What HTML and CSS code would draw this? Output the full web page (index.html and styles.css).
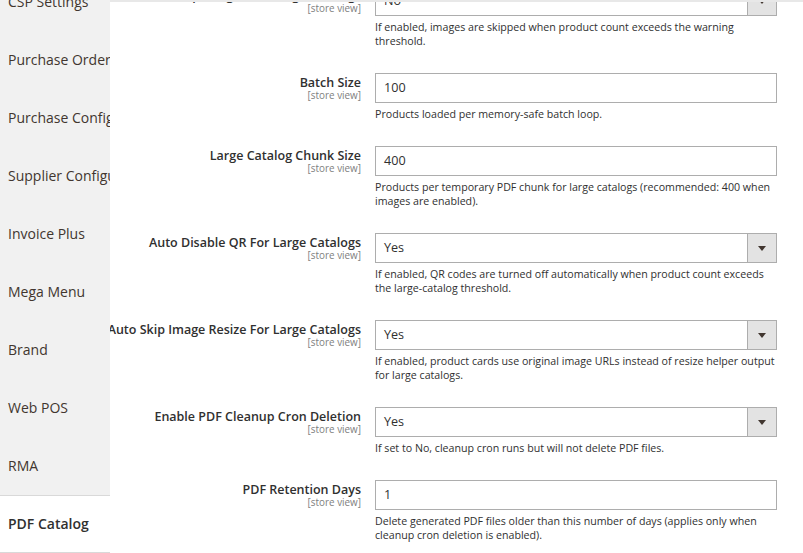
FILE: index.html
```html
<!DOCTYPE html>
<html lang="en">
<head>
<meta charset="utf-8">
<title>PDF Catalog Configuration</title>
<link rel="stylesheet" href="styles.css">
</head>
<body>
<div class="page">
  <nav class="sidebar">
    <div class="tab">CSP Settings</div>
    <div class="tab">Purchase Order</div>
    <div class="tab">Purchase Configuration</div>
    <div class="tab">Supplier Configuration</div>
    <div class="tab">Invoice Plus</div>
    <div class="tab">Mega Menu</div>
    <div class="tab">Brand</div>
    <div class="tab">Web POS</div>
    <div class="tab">RMA</div>
    <div class="tab active">PDF Catalog</div>
  </nav>
  <main class="main">
    <div class="form">
      <div class="row">
        <div class="label"><span class="title">Skip Images For Large Catalogs</span><span class="scope">[store view]</span></div>
        <div class="control">
          <div class="select"><span class="value">No</span><span class="btn"><span class="arrow"></span></span></div>
          <p class="note">If enabled, images are skipped when product count exceeds the warning threshold.</p>
        </div>
      </div>
      <div class="row">
        <div class="label"><span class="title">Batch Size</span><span class="scope">[store view]</span></div>
        <div class="control">
          <div class="input">100</div>
          <p class="note">Products loaded per memory-safe batch loop.</p>
        </div>
      </div>
      <div class="row">
        <div class="label"><span class="title">Large Catalog Chunk Size</span><span class="scope">[store view]</span></div>
        <div class="control">
          <div class="input">400</div>
          <p class="note">Products per temporary PDF chunk for large catalogs (recommended: 400 when images are enabled).</p>
        </div>
      </div>
      <div class="row">
        <div class="label"><span class="title">Auto Disable QR For Large Catalogs</span><span class="scope">[store view]</span></div>
        <div class="control">
          <div class="select"><span class="value">Yes</span><span class="btn"><span class="arrow"></span></span></div>
          <p class="note">If enabled, QR codes are turned off automatically when product count exceeds the large-catalog threshold.</p>
        </div>
      </div>
      <div class="row">
        <div class="label"><span class="title">Auto Skip Image Resize For Large Catalogs</span><span class="scope">[store view]</span></div>
        <div class="control">
          <div class="select"><span class="value">Yes</span><span class="btn"><span class="arrow"></span></span></div>
          <p class="note">If enabled, product cards use original image URLs instead of resize helper output for large catalogs.</p>
        </div>
      </div>
      <div class="row">
        <div class="label"><span class="title">Enable PDF Cleanup Cron Deletion</span><span class="scope">[store view]</span></div>
        <div class="control">
          <div class="select"><span class="value">Yes</span><span class="btn"><span class="arrow"></span></span></div>
          <p class="note">If set to No, cleanup cron runs but will not delete PDF files.</p>
        </div>
      </div>
      <div class="row">
        <div class="label"><span class="title">PDF Retention Days</span><span class="scope">[store view]</span></div>
        <div class="control">
          <div class="input">1</div>
          <p class="note">Delete generated PDF files older than this number of days (applies only when cleanup cron deletion is enabled).</p>
        </div>
      </div>
    </div>
  </main>
</div>
</body>
</html>
```
FILE: styles.css
```css
html, body {
  margin: 0;
  padding: 0;
  height: 100%;
  overflow: hidden;
  background: #ffffff;
  font-family: "Open Sans", "Liberation Sans", sans-serif;
  color: #303030;
}

.page {
  display: flex;
  height: 553px;
  overflow: hidden;
}

.sidebar {
  width: 110px;
  flex: 0 0 110px;
  background: #f1f1f1;
  overflow: hidden;
  display: flex;
  flex-direction: column;
}

.tab {
  flex: 0 0 58px;
  height: 58px;
  box-sizing: border-box;
  padding-left: 8px;
  line-height: 58px;
  font-size: 14px;
  color: #41362f;
  white-space: nowrap;
  overflow: hidden;
}

.tab:first-child {
  margin-top: -27px;
}

.tab.active {
  background: #ffffff;
  border-top: 1px solid #d9d9d9;
  border-bottom: 1px solid #d9d9d9;
  line-height: 56px;
  font-weight: 600;
  color: #303030;
}

.main {
  flex: 1 1 auto;
  border-top: 2px solid #e8e8e8;
  overflow: hidden;
}

.form {
  margin-top: -16px;
}

.row {
  display: grid;
  grid-template-columns: 251px 402px;
  column-gap: 14px;
  margin-bottom: 25px;
}

.label {
  display: flex;
  flex-direction: column;
  align-items: flex-end;
  padding-top: 2.5px;
  white-space: nowrap;
  text-align: right;
}

.title {
  font-size: 12.5px;
  line-height: 14px;
  font-weight: 600;
  color: #303030;
}

.scope {
  font-size: 9.9px;
  line-height: 11px;
  color: #808080;
}

.control {
  display: flex;
  flex-direction: column;
}

.input,
.select {
  height: 30px;
  box-sizing: border-box;
  border: 1px solid #adadad;
  background: #ffffff;
  font-size: 12.6px;
  line-height: 28px;
  color: #303030;
}

.input {
  padding-left: 8px;
}

.select {
  display: flex;
}

.value {
  flex: 1 1 auto;
  padding-left: 8px;
}

.btn {
  flex: 0 0 28px;
  width: 28px;
  border-left: 1px solid #adadad;
  background: #e3e3e3;
  display: flex;
  align-items: center;
  justify-content: center;
}

.arrow {
  width: 0;
  height: 0;
  border-left: 4px solid transparent;
  border-right: 4px solid transparent;
  border-top: 5px solid #41362f;
}

.note {
  margin: 4px -2px 0 0;
  font-size: 10.65px;
  line-height: 14px;
  color: #303030;
}
```
